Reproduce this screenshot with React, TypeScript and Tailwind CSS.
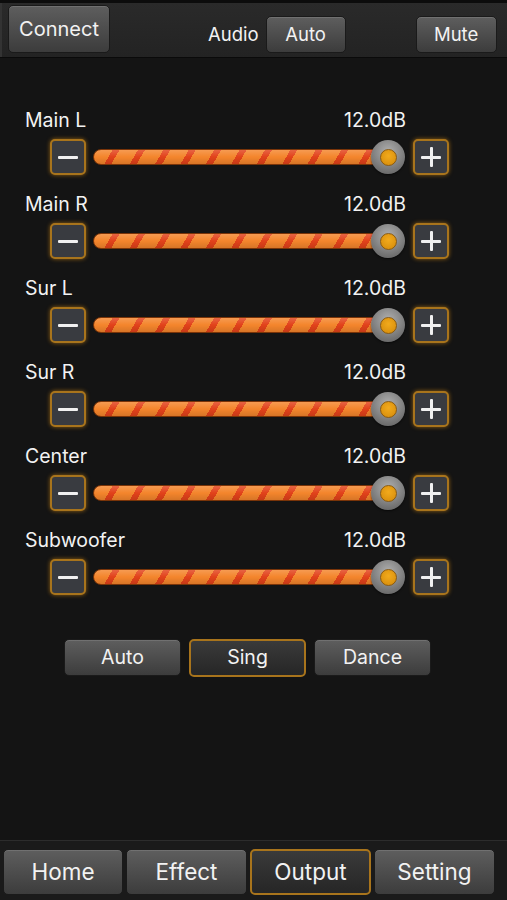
import React from "react";

const channels = ["Main L", "Main R", "Sur L", "Sur R", "Center", "Subwoofer"];

const btn =
  "flex items-center justify-center rounded-[5px] border border-[#1a1a1a] bg-[linear-gradient(to_bottom,#5e5e5e,#3c3c3c)] text-[#f2f2f2] shadow-[inset_0_1px_0_rgba(255,255,255,0.12)]";
const btnSel =
  "flex items-center justify-center rounded-[5px] border-2 border-[#a8741c] bg-[linear-gradient(to_bottom,#3a3a3a,#262626)] text-[#f2f2f2]";

function StepBtn({ plus }: { plus?: boolean }) {
  return (
    <div className="relative w-[36px] h-[36px] rounded-[5px] border-2 border-[#a8741c] bg-[#393b40] shadow-[0_0_4px_rgba(200,130,20,0.7)] flex items-center justify-center">
      <div className="absolute w-[20px] h-[3px] bg-[#f0f0f0] rounded-[1px]" />
      {plus && <div className="absolute w-[3px] h-[20px] bg-[#f0f0f0] rounded-[1px]" />}
    </div>
  );
}

function Row({ name }: { name: string }) {
  return (
    <div className="flex flex-col">
      <div className="flex justify-between items-center h-[24px] pt-[2px] pl-[25px] pr-[101px] text-[19.5px] text-[#f2f2f2]">
        <span>{name}</span>
        <span>12.0dB</span>
      </div>
      <div className="flex items-center h-[36px] mt-[7px] mb-[17px] pl-[50px]">
        <StepBtn />
        <div className="relative ml-[7px] w-[312px] h-[36px] flex items-center">
          <div className="w-[300px] h-[16px] rounded-full border border-[#7a3408] bg-[linear-gradient(to_bottom,rgba(255,255,255,0.18),rgba(255,255,255,0)_50%,rgba(0,0,0,0.12)),repeating-linear-gradient(120deg,#f4852c_0px,#f4852c_16px,#e2421a_16px,#e2421a_22px)]" />
          <div className="absolute right-0 top-[1px] w-[34px] h-[34px] rounded-full bg-[radial-gradient(circle_at_50%_35%,#b0b0b0,#727272_70%,#5a5a5a)] shadow-[0_1px_2px_rgba(0,0,0,0.6)] flex items-center justify-center">
            <div className="w-[17px] h-[17px] rounded-full border border-[#8a5a10] bg-[radial-gradient(circle_at_50%_40%,#f2aa1c,#d38a0a)]" />
          </div>
        </div>
        <div className="ml-[8px]">
          <StepBtn plus />
        </div>
      </div>
    </div>
  );
}

export default function App() {
  return (
    <div
      className="w-[507px] h-[900px] bg-[#141414] flex flex-col overflow-hidden"
      style={{ fontFamily: "Inter, 'Liberation Sans', sans-serif" }}
    >
      {/* top bar */}
      <div className="h-[58px] border-t-[3px] border-t-[#0c0c0c] border-b border-b-[#0a0a0a] bg-[linear-gradient(to_bottom,#2a2a2a,#232323)] flex items-start relative pl-[8px]">
        <div className="absolute left-0 top-0 bottom-0 w-[2px] bg-[#333]" />
        <div className={`${btn} w-[102px] h-[48px] mt-[2px] text-[20px]`}>Connect</div>
        <div className="flex items-center mt-[13px] ml-[98px]">
          <span className="text-[18.5px] text-[#f2f2f2] mr-[7px]">Audio</span>
          <div className={`${btn} w-[80px] h-[37px] text-[18.5px]`}>Auto</div>
        </div>
        <div className={`${btn} w-[81px] h-[37px] text-[18.5px] mt-[13px] ml-[70px]`}>Mute</div>
      </div>

      {/* rows */}
      <div className="flex flex-col pt-[50px]">
        {channels.map((c) => (
          <Row key={c} name={c} />
        ))}
      </div>

      {/* mode buttons */}
      <div className="flex pl-[64px] gap-[8px] mt-[27px]">
        <div className={`${btn} w-[117px] h-[37px] text-[19.5px]`}>Auto</div>
        <div className={`${btnSel} w-[117px] h-[38px] text-[19.5px]`}>Sing</div>
        <div className={`${btn} w-[117px] h-[37px] text-[19.5px]`}>Dance</div>
      </div>

      <div className="flex-1" />

      {/* tab bar */}
      <div className="h-[60px] border-t border-t-[#2c2c2c] bg-[#1a1a1a] flex items-start pt-[8px] pl-[3px] gap-[3px]">
        <div className={`${btn} w-[120px] h-[46px] text-[22.5px]`}>Home</div>
        <div className={`${btn} w-[121px] h-[46px] text-[22.5px]`}>Effect</div>
        <div className={`${btnSel} w-[121px] h-[46px] text-[22.5px]`}>Output</div>
        <div className={`${btn} w-[121px] h-[46px] text-[22.5px]`}>Setting</div>
      </div>
    </div>
  );
}
